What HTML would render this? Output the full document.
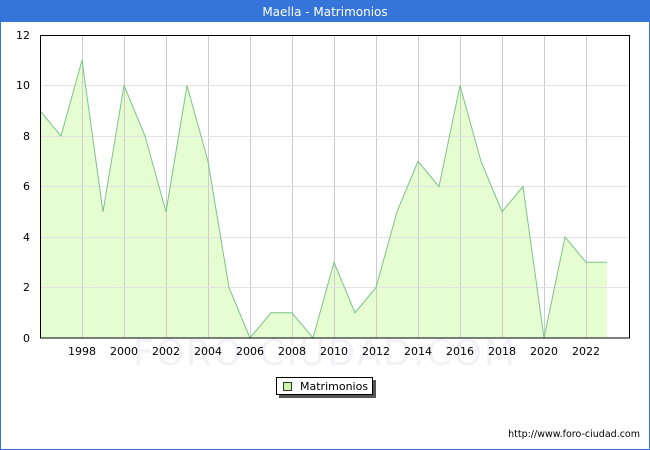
<!DOCTYPE html>
<html><head><meta charset="utf-8"><style>
html,body{margin:0;padding:0;width:650px;height:450px;overflow:hidden;background:#fff}
svg{display:block}
text{font-family:"DejaVu Sans","Liberation Sans",sans-serif}
</style></head><body>
<svg width="650" height="450" viewBox="0 0 650 450" xmlns="http://www.w3.org/2000/svg">
<rect x="0.5" y="0.5" width="649" height="449" fill="#fff" stroke="#3574d9"/>
<rect x="0" y="0" width="650" height="22" fill="#3574d9"/>
<text x="325" y="16" text-anchor="middle" font-size="12" fill="#fff">Maella - Matrimonios</text>
<text x="325" y="365" text-anchor="middle" font-size="36" fill="#f2f2f6" letter-spacing="2">FORO-CIUDAD.COM</text>
<polygon fill="#e5fdd0" points="40,338 40,110.75 61,136 82,60.25 103,211.75 124,85.5 145,136 166,211.75 187,85.5 208,161.25 229,287.5 250,338 271,312.75 292,312.75 313,338 334,262.25 355,312.75 376,287.5 397,211.75 418,161.25 439,186.5 460,85.5 481,161.25 502,211.75 523,186.5 544,338 565,237 586,262.25 607,262.25 607,338"/>
<g stroke="#cccccc" stroke-width="1">
<line x1="82.5" y1="36" x2="82.5" y2="338"/><line x1="124.5" y1="36" x2="124.5" y2="338"/><line x1="166.5" y1="36" x2="166.5" y2="338"/><line x1="208.5" y1="36" x2="208.5" y2="338"/><line x1="250.5" y1="36" x2="250.5" y2="338"/><line x1="292.5" y1="36" x2="292.5" y2="338"/><line x1="334.5" y1="36" x2="334.5" y2="338"/><line x1="376.5" y1="36" x2="376.5" y2="338"/><line x1="418.5" y1="36" x2="418.5" y2="338"/><line x1="460.5" y1="36" x2="460.5" y2="338"/><line x1="502.5" y1="36" x2="502.5" y2="338"/><line x1="544.5" y1="36" x2="544.5" y2="338"/><line x1="586.5" y1="36" x2="586.5" y2="338"/>
</g>
<g stroke="#e2e2e2" stroke-width="1">
<line x1="40" y1="287.5" x2="630" y2="287.5"/><line x1="40" y1="237.5" x2="630" y2="237.5"/><line x1="40" y1="186.5" x2="630" y2="186.5"/><line x1="40" y1="136.5" x2="630" y2="136.5"/><line x1="40" y1="85.5" x2="630" y2="85.5"/>
</g>
<polyline fill="none" stroke="#7cc48a" stroke-width="1" points="40,110.75 61,136 82,60.25 103,211.75 124,85.5 145,136 166,211.75 187,85.5 208,161.25 229,287.5 250,338 271,312.75 292,312.75 313,338 334,262.25 355,312.75 376,287.5 397,211.75 418,161.25 439,186.5 460,85.5 481,161.25 502,211.75 523,186.5 544,338 565,237 586,262.25 607,262.25"/>
<rect x="40.5" y="35.5" width="589" height="302.5" fill="none" stroke="#000"/>
<g font-size="11" fill="#000" text-anchor="end">
<text x="30" y="342">0</text><text x="30" y="291">2</text><text x="30" y="241">4</text><text x="30" y="190">6</text><text x="30" y="140">8</text><text x="30" y="89">10</text><text x="30" y="39">12</text>
</g>
<g font-size="11" fill="#000" text-anchor="middle">
<text x="82" y="355">1998</text><text x="124" y="355">2000</text><text x="166" y="355">2002</text><text x="208" y="355">2004</text><text x="250" y="355">2006</text><text x="292" y="355">2008</text><text x="334" y="355">2010</text><text x="376" y="355">2012</text><text x="418" y="355">2014</text><text x="460" y="355">2016</text><text x="502" y="355">2018</text><text x="544" y="355">2020</text><text x="586" y="355">2022</text>
</g>
<rect x="279" y="380" width="97" height="18" fill="#555"/>
<rect x="276.5" y="377.5" width="96" height="17" fill="#fff" stroke="#000"/>
<rect x="283.5" y="382.5" width="8" height="8" fill="#ccf5a8" stroke="#333"/>
<text x="300" y="390" font-size="11" fill="#000">Matrimonios</text>
<text x="640" y="437" font-size="9.5" fill="#000" text-anchor="end">http://www.foro-ciudad.com</text>
</svg>
</body></html>
